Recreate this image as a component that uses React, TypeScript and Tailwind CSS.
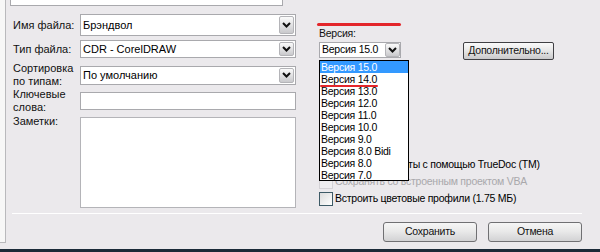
import React from "react";

const versions = [
  "Версия 15.0",
  "Версия 14.0",
  "Версия 13.0",
  "Версия 12.0",
  "Версия 11.0",
  "Версия 10.0",
  "Версия 9.0",
  "Версия 8.0 Bidi",
  "Версия 8.0",
  "Версия 7.0",
];

function Chevron() {
  return (
    <svg width="9" height="6" viewBox="0 0 9 6" className="block">
      <path d="M1 1 L4.5 4.5 L8 1" fill="none" stroke="#111" strokeWidth="2" />
    </svg>
  );
}

function ArrowButton({ className = "" }: { className?: string }) {
  return (
    <span
      className={`flex items-center justify-center w-[15px] bg-gradient-to-b from-[#fbfbfb] to-[#c9c9cc] border border-[#b4b4b8] rounded-[2px] ${className}`}
    >
      <Chevron />
    </span>
  );
}

function Combo({ value, h }: { value: string; h: string }) {
  return (
    <div
      className={`flex items-stretch w-[216px] ${h} bg-white border border-[#a9a9ad] pl-[2px] pr-[1px] py-[1px] text-[11px] tracking-normal`}
    >
      <span className="flex-1 flex items-center">{value}</span>
      <ArrowButton />
    </div>
  );
}

function Label({ children }: { children: React.ReactNode }) {
  return (
    <div className="w-[67px] leading-[13px] text-[11px] tracking-normal text-[#111]">
      {children}
    </div>
  );
}

function Checkbox({ disabled }: { disabled?: boolean }) {
  return (
    <span
      className={`w-[14px] h-[14px] shrink-0 border ${
        disabled
          ? "border-[#d4d2d6] bg-[#eeedef]"
          : "border-[#3d5a66] bg-gradient-to-br from-[#dcdcdc] to-[#ffffff]"
      }`}
    />
  );
}

function DialogButton({ children }: { children: React.ReactNode }) {
  return (
    <button
      type="button"
      className="w-[94px] h-[20px] flex items-center justify-center border border-[#707073] rounded-[3px] bg-gradient-to-b from-[#f6f6f6] via-[#e8e8e8] to-[#d2d2d4] text-[#111]"
    >
      {children}
    </button>
  );
}

export default function App() {
  return (
    <div className="w-[600px] h-[252px] flex flex-col bg-[#ebe9ec] overflow-hidden text-[10.5px] tracking-[-0.25px] font-['Liberation_Sans',Arial,sans-serif] text-black">
      <div className="flex h-[249px]">
        <div className="w-[6px] h-[243px] shrink-0 bg-[#f7f7f7] border-r border-b border-[#b9b9bc]" />
        <div className="flex-1 flex flex-col">
          <div className="ml-[4px] w-[273px] h-[6px] bg-white border-x border-b border-[#a9a9ad]" />

          <div className="flex h-[194px] mt-[8px] pl-[7px]">
            <div className="w-[283px] flex flex-col">
              <div className="flex items-center h-[22px]">
                <Label>Имя файла:</Label>
                <Combo value="Брэндвол" h="h-[22px]" />
              </div>
              <div className="flex items-center h-[18px] mt-[4px]">
                <Label>Тип файла:</Label>
                <Combo value="CDR - CorelDRAW" h="h-[18px]" />
              </div>
              <div className="flex items-center h-[26px] mt-[4px]">
                <Label>
                  Сортировка
                  <br />
                  по типам:
                </Label>
                <Combo value="По умолчанию" h="h-[19px]" />
              </div>
              <div className="flex items-center h-[26px]">
                <Label>
                  Ключевые
                  <br />
                  слова:
                </Label>
                <div className="w-[216px] h-[18px] bg-white border border-[#a9a9ad]" />
              </div>
              <div className="flex items-start mt-[1px]">
                <Label>Заметки:</Label>
                <div className="mt-[2px] w-[216px] h-[91px] bg-white border border-[#b4b4b8]" />
              </div>
            </div>

            <div className="relative ml-[22px] flex-1 flex flex-col">
              <div className="mt-[9px] -ml-[1px] w-[84px] h-[3px] rounded-full bg-[#e3262b]" />
              <div className="mt-[1px] ml-[1px] leading-[13px] text-[#111]">Версия:</div>
              <div className="flex items-start mt-[2px]">
                <div className="flex items-stretch ml-[1px] w-[82px] h-[16px] bg-white border border-[#a9a9ad]">
                  <span className="flex-1 flex items-center pl-[2px]">Версия 15.0</span>
                  <ArrowButton className="border-[#6f6f73]" />
                </div>
                <button
                  type="button"
                  className="ml-[62px] w-[91px] h-[18px] flex items-center justify-center border border-[#404044] rounded-[2px] bg-gradient-to-b from-[#fafafa] via-[#e6e6e6] to-[#c9c9cb] text-[#111]"
                >
                  Дополнительно...
                </button>
              </div>

              <div className="flex items-center gap-[2px] h-[18px] mt-[96px] ml-[1px]">
                <Checkbox />
                <span>Встроить шрифты с помощью TrueDoc (TM)</span>
              </div>
              <div className="flex items-center gap-[2px] h-[18px] ml-[1px]">
                <Checkbox disabled />
                <span className="text-[#a9a8ab]">Сохранять со встроенным проектом VBA</span>
              </div>
              <div className="flex items-center gap-[2px] h-[18px] ml-[1px]">
                <Checkbox />
                <span>Встроить цветовые профили (1.75 МБ)</span>
              </div>

              <div className="absolute left-[1px] top-[46px] w-[90px] h-[121px] bg-white border border-black flex flex-col">
                {versions.map((v, i) => (
                  <div
                    key={v}
                    className={`h-[12px] leading-[12px] pl-[1px] whitespace-nowrap ${
                      i === 0 ? "bg-[#3399ff] text-white" : "text-black"
                    }`}
                  >
                    {v}
                  </div>
                ))}
                <div className="absolute left-[0px] top-[24px] w-[58px] h-[2px] rounded-full bg-[#e3262b]" />
              </div>
            </div>
          </div>

          <div className="mt-[5px] ml-[6px] w-[570px] h-[1px] bg-[#b3b1b5] border-b border-white" />

          <div className="flex justify-end gap-[11px] mt-[8px] pr-[18px]">
            <DialogButton>Сохранить</DialogButton>
            <DialogButton>Отмена</DialogButton>
          </div>
        </div>
      </div>
      <div className="h-[3px] bg-[#1b2a38]" />
    </div>
  );
}
